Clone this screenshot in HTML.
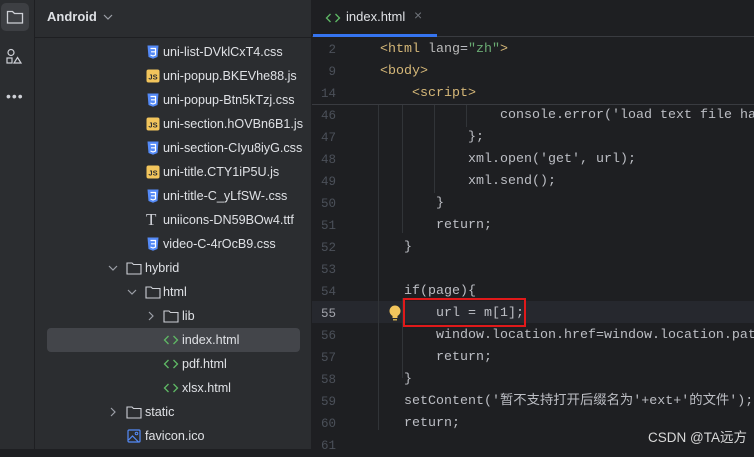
<!DOCTYPE html>
<html><head><meta charset="utf-8"><style>
*{margin:0;padding:0;box-sizing:border-box}
body{width:754px;height:449px;overflow:hidden;background:#1e1f22;position:relative;font-family:"Liberation Sans","Noto Sans CJK SC",sans-serif}
.abs{position:absolute}
#strip{left:0;top:0;width:35px;height:449px;background:#2b2d30;border-right:1px solid #1e1f22}
#panel{left:35px;top:0;width:277px;height:449px;background:#2b2d30;border-right:1px solid #1e1f22}
.row{position:absolute;height:24px;line-height:24px;font-size:12.6px;color:#dfe1e5;white-space:nowrap}
.ic{position:absolute;top:5px}
.code{position:absolute;font-family:"Liberation Mono","Noto Sans CJK SC",monospace;font-size:13.33px;color:#bcbec4;white-space:pre;line-height:22px;height:22px}
.ln{position:absolute;left:312px;width:24px;text-align:right;font-family:"Liberation Mono",monospace;font-size:12.5px;color:#4b5059;line-height:22px;height:22px}
.g{position:absolute;width:1px;background:#313438}
</style></head><body>
<div id="strip" class="abs">
  <div class="abs" style="left:1px;top:3px;width:28px;height:28px;background:#3d3f43;border-radius:5px"></div>
  <svg class="abs" style="left:5px;top:7px" width="20" height="20" viewBox="0 0 20 20"><path d="M2.5 4.5h5l2 2h8v9.5h-15z" fill="none" stroke="#ced0d6" stroke-width="1.3"/></svg>
  <svg class="abs" style="left:5px;top:48px" width="18" height="18" viewBox="0 0 18 18" fill="none" stroke="#ced0d6" stroke-width="1.2"><circle cx="6" cy="4.5" r="3"/><rect x="2" y="10" width="5" height="5"/><path d="M12.5 9.5l3.5 5.5h-7z"/></svg>
  <div class="abs" style="left:6px;top:88px;color:#ced0d6;font-size:14px;letter-spacing:1px">•••</div>
</div>
<div id="panel" class="abs">
  <div class="abs" style="left:12px;top:9px;font-size:13px;font-weight:bold;color:#dfe1e5">Android</div>
  <svg class="abs" style="left:68px;top:13px" width="10" height="8" viewBox="0 0 10 8"><path d="M1 2l4 4 4-4" fill="none" stroke="#9da0a8" stroke-width="1.2"/></svg>
  <div class="abs" style="left:0;top:37px;width:277px;height:1px;background:#1e1f22"></div>
</div>
<div class="abs" style="left:47px;top:328px;width:253px;height:24px;background:#43454a;border-radius:4px"></div>

<svg width="0" height="0" style="position:absolute"><defs>
<symbol id="css" viewBox="0 0 14 14"><path d="M1.5 0.5h11l-1 11.5-4.5 1.8-4.5-1.8z" fill="#548af7"/><path d="M4.5 3.5h5v6.5l-2.5 1-2.5-1M5 6.8h4" fill="none" stroke="#fff" stroke-width="1.2"/></symbol>
<symbol id="js" viewBox="0 0 14 14"><rect x="0.5" y="0.5" width="13" height="13" rx="2" fill="#f2c55c"/><text x="7" y="10.5" font-size="7.5" font-family="Liberation Sans" font-weight="bold" text-anchor="middle" fill="#2b2d30">JS</text></symbol>
<symbol id="fold" viewBox="0 0 16 14"><path d="M1 2h5l1.5 1.5h7.5v9.5h-14z" fill="none" stroke="#ced0d6" stroke-width="1.1"/></symbol>
<symbol id="htm" viewBox="0 0 16 14"><path d="M5.5 3l-4 4 4 4M10.5 3l4 4-4 4" fill="none" stroke="#5fb865" stroke-width="1.3"/></symbol>
</defs></svg>

<div class="row" style="left:146px;top:40px"><svg class="ic" style="left:0" width="14" height="14"><use href="#css"/></svg><span style="margin-left:17px">uni-list-DVklCxT4.css</span></div>
<div class="row" style="left:146px;top:64px"><svg class="ic" style="left:0" width="14" height="14"><use href="#js"/></svg><span style="margin-left:17px">uni-popup.BKEVhe88.js</span></div>
<div class="row" style="left:146px;top:88px"><svg class="ic" style="left:0" width="14" height="14"><use href="#css"/></svg><span style="margin-left:17px">uni-popup-Btn5kTzj.css</span></div>
<div class="row" style="left:146px;top:112px"><svg class="ic" style="left:0" width="14" height="14"><use href="#js"/></svg><span style="margin-left:17px">uni-section.hOVBn6B1.js</span></div>
<div class="row" style="left:146px;top:136px"><svg class="ic" style="left:0" width="14" height="14"><use href="#css"/></svg><span style="margin-left:17px">uni-section-CIyu8iyG.css</span></div>
<div class="row" style="left:146px;top:160px"><svg class="ic" style="left:0" width="14" height="14"><use href="#js"/></svg><span style="margin-left:17px">uni-title.CTY1iP5U.js</span></div>
<div class="row" style="left:146px;top:184px"><svg class="ic" style="left:0" width="14" height="14"><use href="#css"/></svg><span style="margin-left:17px">uni-title-C_yLfSW-.css</span></div>
<div class="row" style="left:146px;top:208px"><span class="abs" style="left:0;top:0;font-family:'Liberation Serif',serif;font-size:17px;color:#ced0d6">T</span><span style="margin-left:17px">uniicons-DN59BOw4.ttf</span></div>
<div class="row" style="left:146px;top:232px"><svg class="ic" style="left:0" width="14" height="14"><use href="#css"/></svg><span style="margin-left:17px">video-C-4rOcB9.css</span></div>

<svg class="abs" style="left:108px;top:264px" width="10" height="8"><path d="M1 2l4 4 4-4" fill="none" stroke="#9da0a8" stroke-width="1.2"/></svg>
<div class="row" style="left:126px;top:256px"><svg class="ic" style="left:0" width="16" height="14"><use href="#fold"/></svg><span style="margin-left:19px">hybrid</span></div>
<svg class="abs" style="left:127px;top:288px" width="10" height="8"><path d="M1 2l4 4 4-4" fill="none" stroke="#9da0a8" stroke-width="1.2"/></svg>
<div class="row" style="left:145px;top:280px"><svg class="ic" style="left:0" width="16" height="14"><use href="#fold"/></svg><span style="margin-left:18px">html</span></div>
<svg class="abs" style="left:147px;top:311px" width="8" height="10"><path d="M2 1l4 4-4 4" fill="none" stroke="#9da0a8" stroke-width="1.2"/></svg>
<div class="row" style="left:163px;top:304px"><svg class="ic" style="left:0" width="16" height="14"><use href="#fold"/></svg><span style="margin-left:19px">lib</span></div>
<div class="row" style="left:163px;top:328px"><svg class="ic" style="left:0" width="16" height="14"><use href="#htm"/></svg><span style="margin-left:19px">index.html</span></div>
<div class="row" style="left:163px;top:352px"><svg class="ic" style="left:0" width="16" height="14"><use href="#htm"/></svg><span style="margin-left:19px">pdf.html</span></div>
<div class="row" style="left:163px;top:376px"><svg class="ic" style="left:0" width="16" height="14"><use href="#htm"/></svg><span style="margin-left:19px">xlsx.html</span></div>
<svg class="abs" style="left:109px;top:407px" width="8" height="10"><path d="M2 1l4 4-4 4" fill="none" stroke="#9da0a8" stroke-width="1.2"/></svg>
<div class="row" style="left:126px;top:400px"><svg class="ic" style="left:0" width="16" height="14"><use href="#fold"/></svg><span style="margin-left:19px">static</span></div>
<div class="row" style="left:127px;top:424px"><svg class="ic" style="left:0" width="14" height="14" viewBox="0 0 14 14"><rect x="1" y="1" width="12" height="12" rx="1" fill="none" stroke="#548af7" stroke-width="1.2"/><circle cx="9.5" cy="4.5" r="1.3" fill="none" stroke="#548af7"/><path d="M1.5 11l4-4 6 6" fill="none" stroke="#548af7" stroke-width="1.2"/></svg><span style="margin-left:18px">favicon.ico</span></div>

<!-- editor -->
<div class="abs" style="left:312px;top:0;width:442px;height:37px;background:#1e1f22;border-bottom:1px solid #393b40"></div>
<svg class="abs" style="left:325px;top:11px" width="16" height="14"><use href="#htm"/></svg>
<div class="abs" style="left:346px;top:9px;font-size:13px;color:#dfe1e5">index.html</div>
<div class="abs" style="left:414px;top:7px;font-size:14px;color:#6f737a">×</div>
<div class="abs" style="left:313px;top:34px;width:124px;height:3px;background:#3574f0"></div>
<div class="abs" style="left:312px;top:104px;width:442px;height:1px;background:#393b40"></div>
<div class="abs" style="left:312px;top:301px;width:442px;height:22px;background:#26282e"></div>

<div class="g" style="left:378px;top:105px;height:325px"></div>
<div class="g" style="left:402px;top:105px;height:128px"></div>
<div class="g" style="left:434px;top:105px;height:88px"></div>
<div class="g" style="left:466px;top:105px;height:22px"></div>
<div class="g" style="left:402px;top:298px;height:80px"></div>

<div style="position:absolute;left:0;top:1px;width:754px;height:449px">
<div class="ln" style="top:38px">2</div><div class="code" style="left:380px;top:38px"><span style="color:#d5b778">&lt;html</span> <span style="color:#bababa">lang</span>=<span style="color:#6aab73">"zh"</span><span style="color:#d5b778">&gt;</span></div>
<div class="ln" style="top:60px">9</div><div class="code" style="left:380px;top:60px;color:#d5b778">&lt;body&gt;</div>
<div class="ln" style="top:82px">14</div><div class="code" style="left:412px;top:82px;color:#d5b778">&lt;script&gt;</div>
<div class="ln" style="top:104px">46</div><div class="code" style="left:500px;top:104px">console.error('load text file ha</div>
<div class="ln" style="top:126px">47</div><div class="code" style="left:468px;top:126px">};</div>
<div class="ln" style="top:148px">48</div><div class="code" style="left:468px;top:148px">xml.open('get', url);</div>
<div class="ln" style="top:170px">49</div><div class="code" style="left:468px;top:170px">xml.send();</div>
<div class="ln" style="top:192px">50</div><div class="code" style="left:436px;top:192px">}</div>
<div class="ln" style="top:214px">51</div><div class="code" style="left:436px;top:214px">return;</div>
<div class="ln" style="top:236px">52</div><div class="code" style="left:404px;top:236px">}</div>
<div class="ln" style="top:258px">53</div>
<div class="ln" style="top:280px">54</div><div class="code" style="left:404px;top:280px">if(page){</div>
<div class="ln" style="top:302px;color:#a1a3ab">55</div><div class="code" style="left:436px;top:302px">url = m[1];</div>
<div class="ln" style="top:324px">56</div><div class="code" style="left:436px;top:324px">window.location.href=window.location.pat</div>
<div class="ln" style="top:346px">57</div><div class="code" style="left:436px;top:346px">return;</div>
<div class="ln" style="top:368px">58</div><div class="code" style="left:404px;top:368px">}</div>
<div class="ln" style="top:390px">59</div><div class="code" style="left:404px;top:390px">setContent('暂不支持打开后缀名为'+ext+'的文件');</div>
<div class="ln" style="top:412px">60</div><div class="code" style="left:404px;top:412px">return;</div>
<div class="ln" style="top:434px">61</div>
</div>

<svg class="abs" style="left:388px;top:304px" width="14" height="18" viewBox="0 0 14 18"><circle cx="7" cy="7" r="5.5" fill="#f2c55c"/><rect x="4.5" y="12" width="5" height="2" fill="#f2c55c"/><rect x="5" y="15" width="4" height="1.5" fill="#c9a94f"/></svg>
<div class="abs" style="left:403px;top:298px;width:123px;height:29px;border:2px solid #e0191a"></div>
<div class="abs" style="left:648px;top:426px;font-size:13.5px;color:#d8d8d8">CSDN @TA远方</div>
</body></html>
